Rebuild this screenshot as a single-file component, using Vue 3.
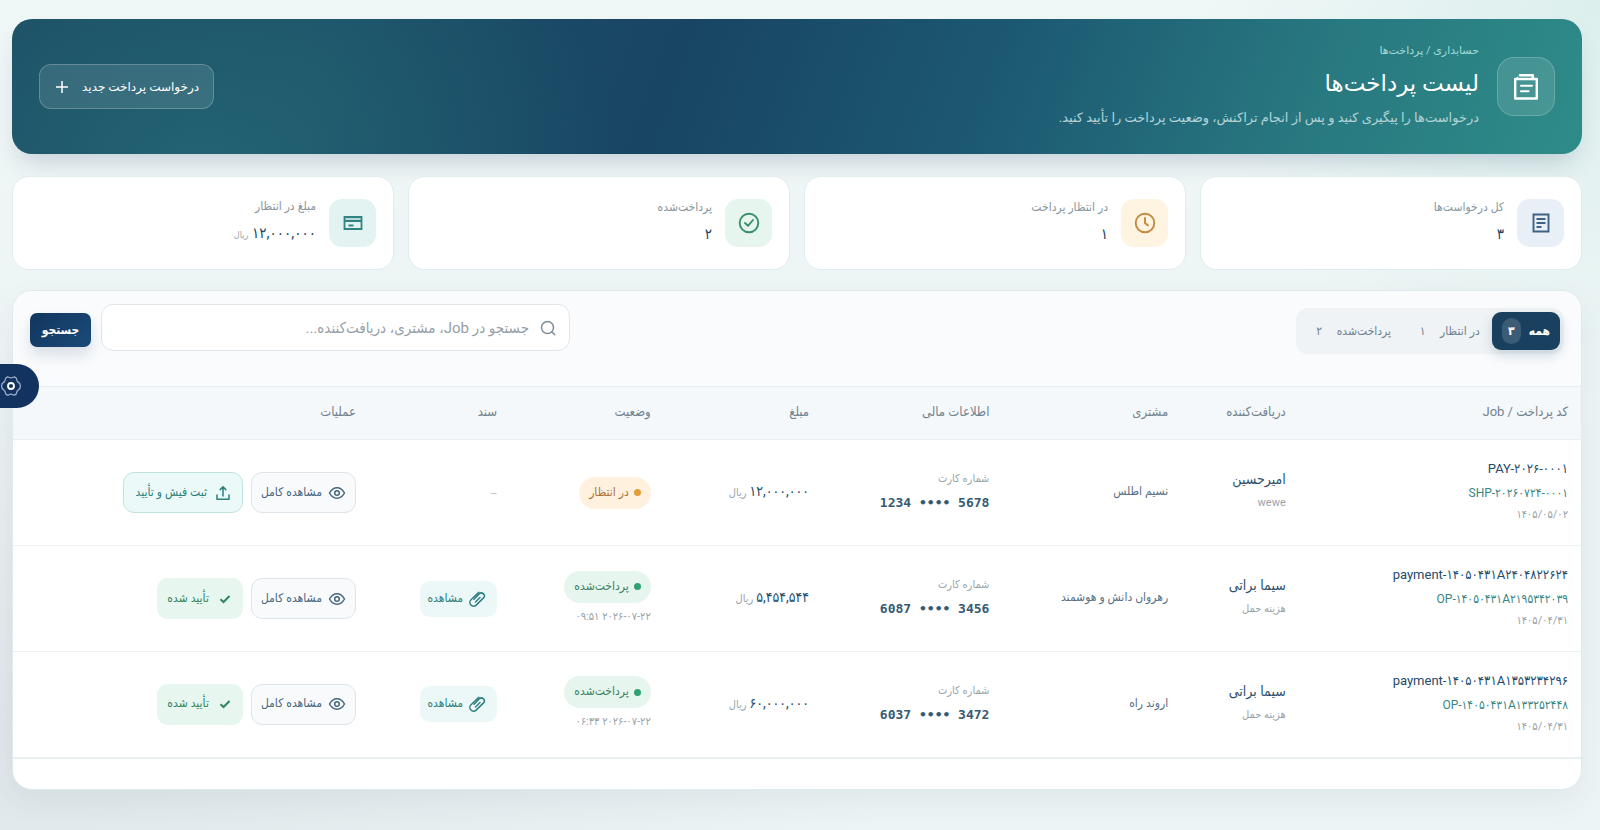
<script setup>
import { ref } from 'vue'

const query = ref('')
const activeTab = ref('all')

const tabs = [
  { id: 'all', label: 'همه', count: '۳' },
  { id: 'pending', label: 'در انتظار', count: '۱' },
  { id: 'paid', label: 'پرداخت‌شده', count: '۲' },
]

const stats = [
  { icon: 'list', tone: 'blue', label: 'کل درخواست‌ها', value: '۳' },
  { icon: 'clock', tone: 'amber', label: 'در انتظار پرداخت', value: '۱' },
  { icon: 'done', tone: 'green', label: 'پرداخت‌شده', value: '۲' },
  { icon: 'card', tone: 'teal', label: 'مبلغ در انتظار', value: '۱۲,۰۰۰,۰۰۰', unit: 'ریال' },
]

const columns = [
  { id: 'code', label: 'کد پرداخت / Job' },
  { id: 'receiver', label: 'دریافت‌کننده' },
  { id: 'customer', label: 'مشتری' },
  { id: 'finance', label: 'اطلاعات مالی' },
  { id: 'amount', label: 'مبلغ' },
  { id: 'status', label: 'وضعیت' },
  { id: 'doc', label: 'سند' },
  { id: 'actions', label: 'عملیات' },
]

const rows = [
  {
    code: 'PAY-۲۰۲۶-۰۰۰۱', job: 'SHP-۲۰۲۶۰۷۲۴-۰۰۰۱', date: '۱۴۰۵/۰۵/۰۲',
    name: 'امیرحسین', note: 'wewe', customer: 'نسیم اطلس',
    card: '1234 •••• 5678', amount: '۱۲,۰۰۰,۰۰۰', paid: false,
  },
  {
    code: 'payment-۱۴۰۵۰۴۳۱A۲۴۰۴۸۲۲۶۲۴', job: 'OP-۱۴۰۵۰۴۳۱A۲۱۹۵۳۴۲۰۳۹', date: '۱۴۰۵/۰۴/۳۱',
    name: 'سیما براتی', note: 'هزینه حمل', customer: 'رهروان دانش و هوشمند',
    card: '6087 •••• 3456', amount: '۵,۴۵۴,۵۴۴', paid: true, paidAt: '۲۰۲۶-۰۷-۲۲ ۰۹:۵۱',
  },
  {
    code: 'payment-۱۴۰۵۰۴۳۱A۱۳۵۳۲۳۴۲۹۶', job: 'OP-۱۴۰۵۰۴۳۱A۱۳۳۲۵۲۴۴۸', date: '۱۴۰۵/۰۴/۳۱',
    name: 'سیما براتی', note: 'هزینه حمل', customer: 'اروند راه',
    card: '6037 •••• 3472', amount: '۶۰,۰۰۰,۰۰۰', paid: true, paidAt: '۲۰۲۶-۰۷-۲۲ ۰۶:۳۳',
  },
]
</script>

<template>
  <div class="page" dir="rtl" lang="fa">
    <header class="hero">
      <div class="hero-icon">
        <svg width="28" height="28" viewBox="0 0 28 28" fill="none" stroke="currentColor" stroke-width="2.4" stroke-linejoin="round" stroke-linecap="round">
          <path d="M3.200 6h21.600v19.500H3.200z" /><path d="M8 2.200h12.800V6" /><path d="M3.500 6 6 4" stroke-width="1" /><path d="M9 12.800h11M9 18.300h7.500" stroke-width="2" />
        </svg>
      </div>
      <div class="hero-text">
        <nav class="crumbs" aria-label="مسیر">حسابداری / پرداخت‌ها</nav>
        <h1>لیست پرداخت‌ها</h1>
        <p>درخواست‌ها را پیگیری کنید و پس از انجام تراکنش، وضعیت پرداخت را تأیید کنید.</p>
      </div>
      <button type="button" class="new-btn">
        <span>درخواست پرداخت جدید</span>
        <svg width="16" height="16" viewBox="0 0 16 16" fill="none" stroke="currentColor" stroke-width="1.500"><path d="M8 2v12M2 8h12" /></svg>
      </button>
    </header>

    <section class="stats">
      <article v-for="s in stats" :key="s.icon" class="stat">
        <div class="stat-icon" :class="s.tone">
          <svg v-if="s.icon === 'list'" width="24" height="24" viewBox="0 0 24 24" fill="none" stroke="currentColor" stroke-width="1.900">
            <path d="M4.500 3.500h15v17h-15z" /><path d="M7.500 8h9M7.500 12h9M7.500 16h5" />
          </svg>
          <svg v-else-if="s.icon === 'clock'" width="24" height="24" viewBox="0 0 24 24" fill="none" stroke="currentColor" stroke-width="1.900" stroke-linecap="round">
            <circle cx="12" cy="12" r="9.300" /><path d="M12 7v5l3 2.500" />
          </svg>
          <svg v-else-if="s.icon === 'done'" width="24" height="24" viewBox="0 0 24 24" fill="none" stroke="currentColor" stroke-width="1.900" stroke-linecap="round" stroke-linejoin="round">
            <circle cx="12" cy="12" r="9.300" /><path d="m8 12 3 2.800L16 9" />
          </svg>
          <svg v-else width="24" height="24" viewBox="0 0 24 24" fill="none" stroke="currentColor" stroke-width="1.800">
            <path d="M4 6h16v4H4z" fill="#2f848240" stroke="none" /><path d="M3.500 6h17v12h-17zM3.500 10h17M7.500 14.500h5" />
          </svg>
        </div>
        <div class="stat-text">
          <span class="stat-label">{{ s.label }}</span>
          <strong class="stat-value">{{ s.value }} <small v-if="s.unit">{{ s.unit }}</small></strong>
        </div>
      </article>
    </section>

    <section class="panel">
      <div class="toolbar">
        <div class="tabs" role="group" aria-label="وضعیت پرداخت">
          <button v-for="t in tabs" :key="t.id" type="button" class="tab" :class="{ active: activeTab === t.id }" :aria-pressed="activeTab === t.id" @click="activeTab = t.id">
            <span>{{ t.label }}</span><span class="count">{{ t.count }}</span>
          </button>
        </div>
        <form class="search" @submit.prevent>
          <div class="search-box">
            <svg width="18" height="18" viewBox="0 0 18 18" fill="none" stroke="currentColor" stroke-width="1.500" stroke-linecap="round" aria-hidden="true">
              <circle cx="8.500" cy="8.500" r="6" /><path d="m13 13 2.800 2.800" />
            </svg>
            <input v-model="query" type="text" aria-label="جستجو" placeholder="جستجو در Job، مشتری، دریافت‌کننده...">
          </div>
          <button type="submit" class="search-btn">جستجو</button>
        </form>
      </div>

      <table>
        <colgroup><col v-for="c in columns" :key="c.id" :class="'col-' + c.id"></colgroup>
        <thead>
          <tr><th v-for="c in columns" :key="c.id" scope="col">{{ c.label }}</th></tr>
        </thead>
        <tbody>
          <tr v-for="r in rows" :key="r.code">
            <td class="text-cell">
              <div class="code" dir="ltr">{{ r.code }}</div>
              <div class="job" dir="ltr">{{ r.job }}</div>
              <div class="date">{{ r.date }}</div>
            </td>
            <td class="text-cell">
              <div class="name">{{ r.name }}</div>
              <div class="note">{{ r.note }}</div>
            </td>
            <td class="text-cell"><div class="customer">{{ r.customer }}</div></td>
            <td class="text-cell">
              <div class="note">شماره کارت</div>
              <div class="card-no" dir="ltr">{{ r.card }}</div>
            </td>
            <td class="text-cell"><span class="amount">{{ r.amount }}</span> <small class="unit">ریال</small></td>
            <td>
              <span class="pill" :class="r.paid ? 'paid' : 'pending'"><i></i><span>{{ r.paid ? 'پرداخت‌شده' : 'در انتظار' }}</span></span>
              <div v-if="r.paid" class="paid-at">{{ r.paidAt }}</div>
            </td>
            <td>
              <a v-if="r.paid" href="#" class="doc">
                <svg width="18" height="18" viewBox="0 0 18 18" fill="none" stroke="currentColor" stroke-width="1.500" stroke-linecap="round" stroke-linejoin="round"><path d="M10.800 2.200 3 9.800a3.700 3.700 0 0 0 5.200 5.300l7.300-7.200a2.900 2.900 0 0 0-4.100-4.100L6 9.200" /><path d="M12 7.500 7.500 12" /></svg>
                <span>مشاهده</span>
              </a>
              <span v-else class="none">—</span>
            </td>
            <td>
              <div class="actions">
                <button type="button" class="act view">
                  <svg width="18" height="18" viewBox="0 0 18 18" fill="none" stroke="currentColor" stroke-width="1.500"><path d="M1.500 9C3.500 5.400 6 3.800 9 3.800s5.500 1.600 7.500 5.200c-2 3.600-4.500 5.200-7.500 5.200S3.500 12.600 1.500 9z" /><circle cx="9" cy="9" r="2.300" /></svg>
                  <span>مشاهده کامل</span>
                </button>
                <span v-if="r.paid" class="act done">
                  <svg width="16" height="16" viewBox="0 0 16 16" fill="none" stroke="currentColor" stroke-width="2"><path d="m3.500 8.300 3 2.700 6-6" /></svg>
                  <span>تأیید شده</span>
                </span>
                <button v-else type="button" class="act upload">
                  <svg width="16" height="16" viewBox="0 0 16 16" fill="none" stroke="currentColor" stroke-width="1.500" stroke-linecap="round" stroke-linejoin="round"><path d="M8 11V2M5.200 4.600 8 1.800l2.800 2.800M2 10v4.200h12V10" /></svg>
                  <span>ثبت فیش و تأیید</span>
                </button>
              </div>
            </td>
          </tr>
        </tbody>
      </table>
    </section>

    <button type="button" class="settings" aria-label="تنظیمات">
      <svg width="22" height="22" viewBox="0 0 22 22" fill="none" stroke="currentColor">
        <path stroke="#9db0cd" stroke-width="1.300" stroke-linejoin="round" d="M7.500 1.800c1.200 0 1.800 1.100 3.500 1.100s2.300-1.100 3.500-1.100c1.400.5 2.100 1.400 2.200 2.700.1 1.500.6 2.200 1.900 2.900 1.200.7 1.800 1.700 1.800 3.600s-.6 2.900-1.800 3.600c-1.300.7-1.800 1.400-1.900 2.900-.1 1.300-.8 2.200-2.200 2.700-1.200 0-1.800-1.100-3.500-1.100s-2.300 1.100-3.500 1.100c-1.400-.5-2.100-1.400-2.200-2.700-.1-1.500-.6-2.200-1.900-2.900C2.200 13.900 1.600 12.900 1.600 11s.6-2.900 1.800-3.600c1.300-.7 1.800-1.400 1.900-2.900.1-1.300.8-2.200 2.200-2.700z" />
        <circle cx="11" cy="11" r="3" stroke-width="1.800" />
      </svg>
    </button>
  </div>
</template>

<style>
body {
  margin: 0;
  background: #e9f0f2;
}
</style>

<style scoped>
.page {
  box-sizing: border-box;
  min-height: 100vh;
  padding: 19px 18px 41px 12px;
  font-family: Roboto, "DejaVu Sans Condensed", "DejaVu Sans", sans-serif;
  font-size: 12px;
  color: #1b4563;
  background:
    radial-gradient(circle at 100% 0, #dcefed 0, #dcefed00 400px),
    radial-gradient(ellipse 900px 420px at 0 88%, #dfe6ea 0, #dfe6ea00 100%),
    linear-gradient(180deg, #f0f7f7 0, #ecf3f4 60%, #edf4f5 100%);
}
.page *, .page *::before { box-sizing: border-box; }
button, input { font-family: inherit; margin: 0; }
button { cursor: pointer; }
svg { flex: none; display: block; }

.hero {
  display: flex;
  align-items: center;
  gap: 18px;
  min-height: 135px;
  padding: 0 27px;
  border-radius: 20px;
  color: #fff;
  font-family: Roboto, "DejaVu Sans", sans-serif;
  background:
    radial-gradient(ellipse 420px 300px at 12% 110%, #26707aa0 0, #26707a00 100%),
    linear-gradient(110deg, #1c4b63 0, #1c4f67 20%, #184564 42%, #1c5872 62%, #287880 82%, #2e8c88 100%);
  box-shadow: 0 14px 26px -8px #1b3a6038;
}
.hero-icon {
  display: grid;
  place-items: center;
  width: 58px;
  height: 59px;
  border-radius: 17px;
  border: 1px solid #ffffff30;
  background: #ffffff1f;
}
.hero-text { flex: 1; padding-bottom: 3px; }
.crumbs { font-size: 11px; line-height: 18px; color: #9fdcd8; }
h1 { margin: 7px 0; font-size: 23px; line-height: 34px; font-weight: 400; }
.hero-text p { margin: 0; font-size: 13px; line-height: 20px; color: #b4d4d8; }
.new-btn {
  display: flex;
  align-items: center;
  gap: 12px;
  height: 45px;
  padding: 0 14px;
  border: 1px solid #ffffff38;
  border-radius: 12px;
  background: #ffffff1c;
  color: #fff;
  font-size: 12px;
}

.stats {
  display: grid;
  grid-template-columns: repeat(4, 1fr);
  gap: 14px;
  margin-top: 22px;
}
.stat {
  display: flex;
  align-items: center;
  gap: 13px;
  height: 94px;
  padding: 0 17px;
  border: 1px solid #e2ecee;
  border-radius: 17px;
  background: #fff;
}
.stat-icon {
  display: grid;
  place-items: center;
  width: 47px;
  height: 48px;
  border-radius: 13px;
}
.blue { background: #e9eff6; color: #3d6285; }
.amber { background: #fff3e2; color: #c4893f; }
.green { background: #e6f5ed; color: #37906a; }
.teal { background: #e3f3f2; color: #2f8482; }
.stat-text { display: flex; flex-direction: column; padding-bottom: 3px; }
.stat-label { font-size: 12px; line-height: 24px; color: #8796a0; }
.stat-value { font-size: 15px; line-height: 30px; font-weight: 400; }
.stat-value small { font-size: 9px; color: #96a3ab; }

.panel {
  margin-top: 20px;
  padding-bottom: 30px;
  border: 1px solid #deeaec;
  border-radius: 20px;
  background: #fff;
  overflow: hidden;
  box-shadow: 0 12px 30px #1b3a6010;
}
.toolbar {
  display: flex;
  justify-content: space-between;
  align-items: flex-start;
  height: 95px;
  padding: 13px 17px;
  background: #f9fbfd;
}
.tabs {
  display: flex;
  gap: 2px;
  height: 46px;
  margin-top: 4px;
  padding: 4px;
  border-radius: 12px;
  background: #eff3f5;
}
.tab {
  display: flex;
  align-items: center;
  gap: 8px;
  padding: 0 10px;
  border: 0;
  border-radius: 9px;
  background: none;
  font-size: 12px;
  color: #6f8290;
}
.count { min-width: 19px; line-height: 26px; border-radius: 10px; }
.tab.active {
  background: #1a405f;
  color: #fff;
  font-weight: 700;
  box-shadow: 0 5px 12px #1a405f30;
}
.active .count { background: #ffffff26; }
.search { display: flex; align-items: center; gap: 10px; width: 540px; }
.search-box {
  display: flex;
  align-items: center;
  flex: 1;
  gap: 10px;
  height: 47px;
  padding: 0 12px;
  border: 1px solid #dfe5e9;
  border-radius: 12px;
  background: #fff;
  color: #7e8c96;
}
.search-box input {
  flex: 1;
  min-width: 0;
  padding: 0;
  border: 0;
  outline: 0;
  background: none;
  font-size: 15px;
}
.search-box input::placeholder { color: #96a0a8; opacity: 1; }
.search-btn {
  width: 61px;
  height: 34px;
  margin-top: 5px;
  padding: 0;
  border: 0;
  border-radius: 7px;
  background: linear-gradient(135deg, #12365f, #1b4a78);
  color: #fff;
  font-size: 12px;
  font-weight: 700;
  box-shadow: 0 8px 14px #12365f24;
}

table { width: 100%; table-layout: fixed; border-collapse: collapse; }
.col-code { width: 18%; }
.col-receiver { width: 7.5%; }
.col-customer { width: 11.4%; }
.col-finance { width: 11.5%; }
.col-amount { width: 10.1%; }
.col-status { width: 9.8%; }
.col-doc { width: 9%; }
.col-actions { width: 22.7%; }
th, td { padding: 0 13px; text-align: right; vertical-align: middle; white-space: nowrap; }
th {
  height: 53px;
  padding-bottom: 3px;
  border-top: 1px solid #e9eef1;
  border-bottom: 1px solid #e9eef1;
  background: #f5f8fa;
  font-size: 13px;
  font-weight: 400;
  color: #70838f;
}
td { height: 106px; border-bottom: 1px solid #edf1f3; }
td.text-cell { padding-bottom: 3px; }
tbody tr:last-child td { border-bottom: 2px solid #e9eef1; }
.code, .job { text-align: right; }
.code { font-size: 13px; line-height: 24px; color: #234b6b; }
.job { font-size: 12px; line-height: 24px; color: #39857f; }
.date, .paid-at { font-size: 11px; line-height: 20px; color: #98a1a8; }
.name { font-size: 14px; line-height: 24px; color: #2c506b; }
.note { font-size: 11px; line-height: 24px; color: #98a4ab; }
.customer { font-size: 12px; line-height: 20px; color: #587082; }
.card-no {
  font-family: "DejaVu Sans Mono", monospace;
  font-size: 13px;
  line-height: 24px;
  font-weight: 700;
  text-align: right;
  color: #355a73;
}
.amount { font-size: 14px; color: #234b6b; }
.unit { font-size: 11px; color: #98a4ab; }
.pill {
  display: inline-flex;
  align-items: center;
  gap: 5px;
  height: 32px;
  padding: 0 10px;
  border-radius: 16px;
  font-size: 12px;
}
.pill span, .doc span, .act span { padding-bottom: 2px; }
.pill i { width: 7px; height: 7px; border-radius: 50%; background: currentColor; }
.paid { background: #e6f5ed; color: #3f8263; }
.paid i { background: #2ea273; }
.pending { background: #fff1de; color: #a9733a; }
.pending i { background: #e39c38; }
.paid-at { margin-top: 4px; }
.doc {
  display: inline-flex;
  align-items: center;
  gap: 5px;
  height: 36px;
  padding: 0 11px 0 7px;
  border-radius: 10px;
  background: #ecf8f8;
  color: #2f7f80;
  font-size: 12px;
  text-decoration: none;
}
.none { font-size: 9px; color: #b0b8be; }
.actions { display: flex; gap: 8px; }
.act {
  display: flex;
  align-items: center;
  gap: 6px;
  height: 41px;
  padding: 0 9px;
  border: 1px solid transparent;
  border-radius: 11px;
  font-size: 12px;
}
.view { background: #f8fafc; border-color: #dde5ea; color: #46667c; }
.done { gap: 8px; background: #e7f6ee; color: #2f8561; }
.upload { gap: 8px; padding: 0 11px; background: #ebf9f8; border-color: #bfe2df; color: #2b7f7c; }

.settings {
  position: fixed;
  left: 0;
  top: 364px;
  display: flex;
  align-items: center;
  justify-content: flex-end;
  width: 39px;
  height: 44px;
  padding: 0;
  border: 0;
  border-radius: 0 22px 22px 0;
  background: #12325f;
  color: #fff;
}
</style>
